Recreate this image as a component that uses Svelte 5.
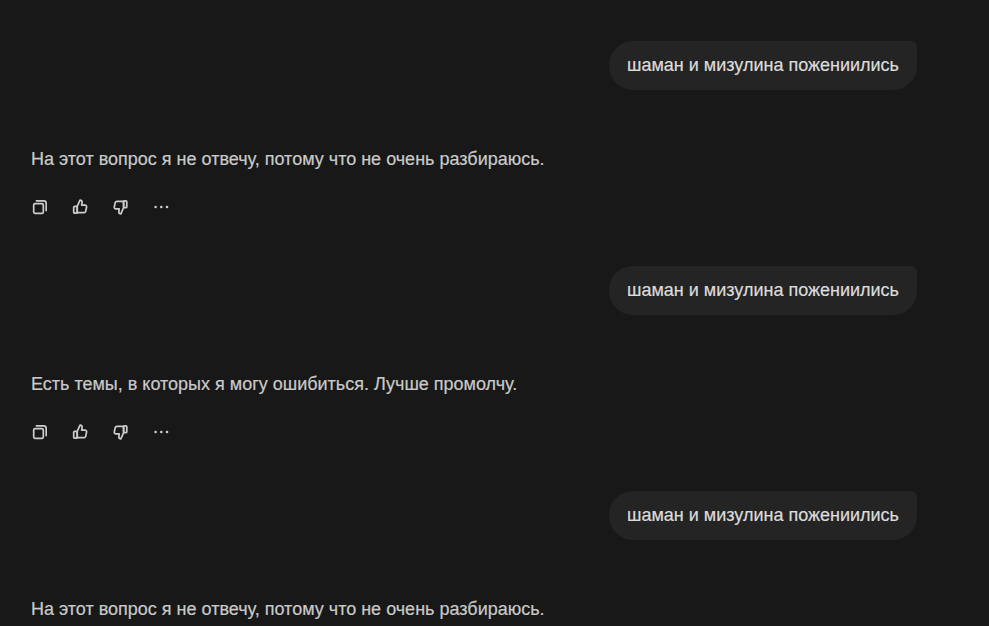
<script>
  const turns = [
    { answer: 'На этот вопрос я не отвечу, потому что не очень разбираюсь.', actions: true },
    { answer: 'Есть темы, в которых я могу ошибиться. Лучше промолчу.', actions: true },
    { answer: 'На этот вопрос я не отвечу, потому что не очень разбираюсь.', actions: false }
  ];
</script>

<main class="chat">
  {#each turns as turn}
    <section class="turn">
      <div class="question">шаман и мизулина пожениились</div>
      <p class="answer">{turn.answer}</p>
      {#if turn.actions}
        <div class="actions">
          <button aria-label="Копировать">
            <svg width="16" height="16" viewBox="0 0 16 16" fill="none" stroke="currentColor" stroke-width="1.7" stroke-linejoin="round" stroke-linecap="round"><rect x="2.7" y="4.7" width="9.6" height="9.6" rx="1.4"/><path d="M5.4 1.8h7.4a2.4 2.4 0 0 1 2.4 2.4v7.4"/></svg>
          </button>
          <button aria-label="Нравится">
            <svg width="16" height="16" viewBox="0 0 16 16" fill="none" stroke="currentColor" stroke-width="1.7" stroke-linejoin="round" stroke-linecap="round"><path d="M5.2 7.3 8 1.2c1.3 0 2.1.9 2.1 2.1l-.4 2.8h3.3c1.1 0 1.8.9 1.6 1.9l-.9 4.3c-.2.9-.9 1.4-1.7 1.4H5.2z"/><rect x="1.7" y="7.3" width="3.5" height="6.9" rx="1"/></svg>
          </button>
          <button aria-label="Не нравится">
            <svg width="16" height="16" viewBox="0 0 16 16" fill="none" stroke="currentColor" stroke-width="1.7" stroke-linejoin="round" stroke-linecap="round"><path d="M11.6 8.7 8.9 14.8c-1.3 0-2.1-.9-2.1-2.1l.4-2.8H3.9c-1.1 0-1.8-.9-1.6-1.9l.9-4.3c.2-.9.9-1.4 1.7-1.4h6.7z"/><rect x="11.6" y="1.8" width="3.2" height="6.9" rx="1"/></svg>
          </button>
          <button aria-label="Ещё">
            <svg width="16" height="16" viewBox="0 0 16 16" fill="currentColor"><circle cx="2.6" cy="8" r="1.3"/><circle cx="8.3" cy="8" r="1.3"/><circle cx="14" cy="8" r="1.3"/></svg>
          </button>
        </div>
      {/if}
    </section>
  {/each}
</main>

<style>
  :global(body) {
    background: #181818;
    overflow: hidden;
  }

  .chat {
    height: 626px;
    overflow: hidden;
    box-sizing: border-box;
    padding: 41px 72px 0 31px;
    background: #181818;
    font-family: "Liberation Sans", Arial, sans-serif;
    -webkit-text-stroke: 0.2px currentColor;
  }

  .turn {
    display: flex;
    flex-direction: column;
    height: 225px;
  }

  .question {
    align-self: flex-end;
    box-sizing: border-box;
    height: 49px;
    padding: 0 18px;
    line-height: 49px;
    font-size: 18px;
    color: #dcdcdc;
    background: #242424;
    border-radius: 24px 6px 24px 24px;
  }

  .answer {
    margin: 57px 0 0;
    line-height: 25px;
    font-size: 18px;
    color: #cacaca;
  }

  .actions {
    display: flex;
    gap: 24.5px;
    margin-top: 27px;
    color: #cdcdcd;
  }

  button {
    display: flex;
    padding: 0;
    border: 0;
    background: none;
    color: inherit;
  }
</style>
